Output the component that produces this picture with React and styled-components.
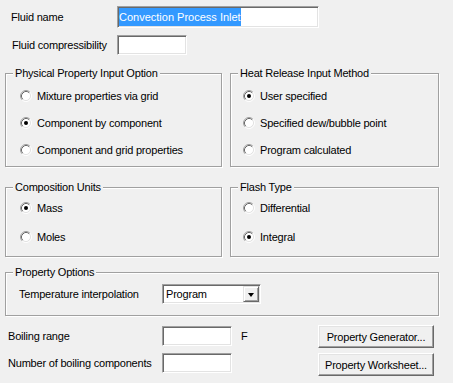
import styled, { createGlobalStyle } from 'styled-components';

const GlobalStyle = createGlobalStyle`
  html, body {
    margin: 0;
    padding: 0;
    background: #f0f0f0;
  }
  body {
    font-family: "Liberation Sans", Arial, sans-serif;
    font-size: 11px;
    letter-spacing: -0.2px;
    color: #000;
  }
  #root {
    width: 453px;
    height: 383px;
    overflow: hidden;
  }
`;

const Page = styled.div`
  display: flex;
  flex-direction: column;
  padding: 6px 0 0 5px;
  width: 453px;
  height: 383px;
  box-sizing: border-box;
`;

const Row = styled.div`
  display: flex;
  align-items: center;
  height: ${p => p.h || 20}px;
  margin-top: ${p => p.mt || 0}px;
`;

const Label = styled.span`
  width: ${p => p.w}px;
  padding-left: ${p => p.indent || 0}px;
  box-sizing: border-box;
  white-space: nowrap;
`;

const TextBox = styled.div`
  width: ${p => p.w}px;
  height: ${p => p.h || 20}px;
  box-sizing: border-box;
  background: #fff;
  border: 1px solid;
  border-color: #a0a0a0 #fff #fff #a0a0a0;
  box-shadow: inset 1px 1px 0 #696969, inset -1px -1px 0 #e3e3e3;
  padding: 1px;
  display: flex;
  align-items: stretch;
`;

const Selected = styled.span`
  background: #3399ff;
  color: #fff;
  display: flex;
  align-items: center;
  letter-spacing: 0;
`;

const GroupGrid = styled.div`
  display: grid;
  grid-template-columns: 217px 209px;
  column-gap: 8px;
  row-gap: 20px;
  margin-top: 18px;
`;

const Group = styled.div`
  position: relative;
  box-sizing: border-box;
  height: ${p => p.h}px;
  width: ${p => (p.w ? `${p.w}px` : 'auto')};
  border: 1px solid #a0a0a0;
  box-shadow: inset 1px 1px 0 #fff, 1px 1px 0 #fff;
  padding: ${p => p.pt || 0}px 0 0 ${p => p.pl || 0}px;
  margin-top: ${p => p.mt || 0}px;
  display: flex;
  flex-direction: column;
  gap: ${p => p.gap || 0}px;
`;

const Legend = styled.span`
  position: absolute;
  top: -7px;
  left: 7px;
  padding: 0 2px;
  line-height: 13px;
  background: #f0f0f0;
  white-space: nowrap;
`;

const RadioRow = styled.label`
  display: flex;
  align-items: center;
  gap: 5px;
  height: 20px;
  white-space: nowrap;
`;

const Radio = ({ checked }) => (
  <svg width="12" height="12" viewBox="0 0 12 12">
    <circle cx="6" cy="6" r="4.5" fill="#fff" />
    <path d="M2.11 9.89 A5.5 5.5 0 0 1 9.89 2.11" fill="none" stroke="#a0a0a0" strokeWidth="1" />
    <path d="M9.89 2.11 A5.5 5.5 0 0 1 2.11 9.89" fill="none" stroke="#ffffff" strokeWidth="1" />
    <path d="M2.82 9.18 A4.5 4.5 0 0 1 9.18 2.82" fill="none" stroke="#696969" strokeWidth="1" />
    <path d="M9.18 2.82 A4.5 4.5 0 0 1 2.82 9.18" fill="none" stroke="#e3e3e3" strokeWidth="1" />
    {checked && <circle cx="6" cy="6" r="2" fill="#000" />}
  </svg>
);

const Option = ({ checked, children }) => (
  <RadioRow>
    <Radio checked={checked} />
    <span>{children}</span>
  </RadioRow>
);

const SelectBox = styled(TextBox)`
  justify-content: space-between;
  align-items: center;
  padding: 1px 1px 1px 3px;
`;

const DropButton = styled.div`
  width: 16px;
  height: 16px;
  box-sizing: border-box;
  background: #f0f0f0;
  border: 1px solid;
  border-color: #e3e3e3 #696969 #696969 #e3e3e3;
  box-shadow: inset 1px 1px 0 #fff, inset -1px -1px 0 #a0a0a0;
  display: flex;
  align-items: center;
  justify-content: center;

  &::after {
    content: '';
    border-left: 3.5px solid transparent;
    border-right: 3.5px solid transparent;
    border-top: 4px solid #000;
    margin-top: 1px;
  }
`;

const Bottom = styled.div`
  display: flex;
  justify-content: space-between;
  padding-right: 19px;
`;

const Column = styled.div`
  display: flex;
  flex-direction: column;
  gap: ${p => p.gap}px;
  margin-top: ${p => p.mt}px;
`;

const Unit = styled.span`
  margin-left: 9px;
`;

const Button = styled.button`
  width: 116px;
  height: 23px;
  box-sizing: border-box;
  font: inherit;
  letter-spacing: inherit;
  color: #000;
  background: #f0f0f0;
  border: 1px solid;
  border-color: #fff #696969 #696969 #fff;
  box-shadow: inset -1px -1px 0 #a0a0a0, inset 1px 1px 0 #e3e3e3;
  padding: 0;
`;

export default function App() {
  return (
    <>
      <GlobalStyle />
      <Page>
        <Row h={22}>
          <Label w={112} indent={6}>Fluid name</Label>
          <TextBox w={202} h={22}>
            <Selected>Convection Process Inlet</Selected>
          </TextBox>
        </Row>
        <Row mt={7}>
          <Label w={112} indent={7}>Fluid compressibility</Label>
          <TextBox w={70} />
        </Row>

        <GroupGrid>
          <Group h={94} pt={12} pl={14} gap={7}>
            <Legend>Physical Property Input Option</Legend>
            <Option>Mixture properties via grid</Option>
            <Option checked>Component by component</Option>
            <Option>Component and grid properties</Option>
          </Group>
          <Group h={94} pt={12} pl={12} gap={7}>
            <Legend>Heat Release Input Method</Legend>
            <Option checked>User specified</Option>
            <Option>Specified dew/bubble point</Option>
            <Option>Program calculated</Option>
          </Group>
          <Group h={70} pt={10} pl={14} gap={9}>
            <Legend>Composition Units</Legend>
            <Option checked>Mass</Option>
            <Option>Moles</Option>
          </Group>
          <Group h={70} pt={10} pl={12} gap={9}>
            <Legend>Flash Type</Legend>
            <Option>Differential</Option>
            <Option checked>Integral</Option>
          </Group>
        </GroupGrid>

        <Group w={434} h={44} mt={15} pt={11} pl={13}>
          <Legend>Property Options</Legend>
          <Row>
            <Label w={143}>Temperature interpolation</Label>
            <SelectBox w={99}>
              <span>Program</span>
              <DropButton />
            </SelectBox>
          </Row>
        </Group>

        <Bottom>
          <Column gap={7} mt={10}>
            <Row>
              <Label w={157} indent={3}>Boiling range</Label>
              <TextBox w={70} />
              <Unit>F</Unit>
            </Row>
            <Row>
              <Label w={157} indent={3}>Number of boiling components</Label>
              <TextBox w={70} />
            </Row>
          </Column>
          <Column gap={5} mt={9}>
            <Button>Property Generator...</Button>
            <Button>Property Worksheet...</Button>
          </Column>
        </Bottom>
      </Page>
    </>
  );
}
